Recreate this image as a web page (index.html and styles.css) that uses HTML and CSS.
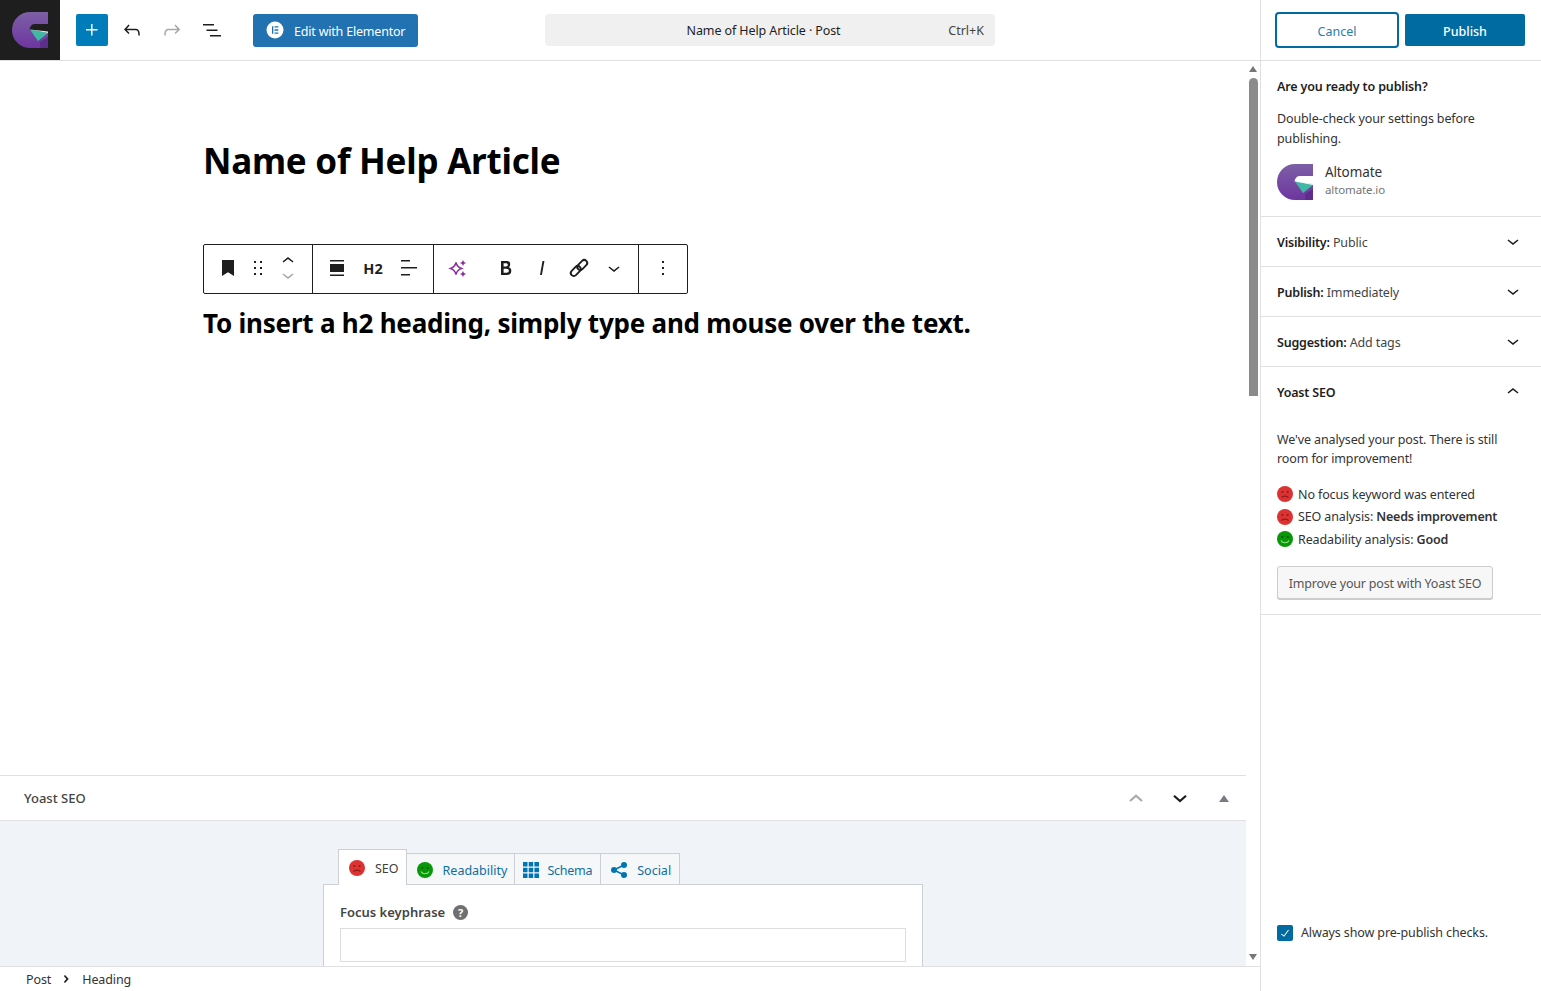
FILE: index.html
```html
<!DOCTYPE html>
<html lang="en">
<head>
<meta charset="utf-8">
<title>Name of Help Article</title>
<link rel="stylesheet" href="styles.css">
</head>
<body>
<svg class="defs" width="0" height="0" aria-hidden="true">
  <defs>
    <linearGradient id="lg" x1="0" y1="0" x2="0" y2="1"><stop offset="0" stop-color="#7d5fa6"/><stop offset="1" stop-color="#6d35a0"/></linearGradient>
    <symbol id="logo" viewBox="0 0 36 36">
      <path fill="url(#lg)" d="M18 0H36V12H23C20 12 18 14 17.500 17.500L36 21V36H18A18 18 0 0 1 18 0Z"/>
      <path fill="#5d2d8c" d="M36 25V36H28V30Z"/>
      <path fill="#3fb9a3" d="M18 17.500L36 21L26 29Z"/>
      <path fill="#dff3ee" d="M18 17.500L36 19.500V21Z"/>
    </symbol>
    <symbol id="sad" viewBox="0 0 16 16">
      <circle cx="8" cy="8" r="8" fill="#dc3232"/>
      <circle cx="5.300" cy="6" r="1" fill="#8e1a1a"/><circle cx="10.700" cy="6" r="1" fill="#8e1a1a"/>
      <path d="M4.500 11.700C6 9.700 10 9.700 11.500 11.700" fill="none" stroke="#8e1a1a" stroke-width="1.200"/>
    </symbol>
    <symbol id="happy" viewBox="0 0 16 16">
      <circle cx="8" cy="8" r="8" fill="#079707"/>
      <circle cx="5.300" cy="6" r="1" fill="#034f03"/><circle cx="10.700" cy="6" r="1" fill="#034f03"/>
      <path d="M4 9.500C5.500 12.500 10.500 12.500 12 9.500" fill="none" stroke="#8fe08f" stroke-width="1.200"/>
    </symbol>
    <symbol id="chev-down" viewBox="0 0 24 24"><path d="M17.500 11.600L12 16l-5.500-4.400.9-1.200L12 14l4.500-3.600 1 1.200z"/></symbol>
    <symbol id="chev-up" viewBox="0 0 24 24"><path d="M6.500 12.400L12 8l5.500 4.400-.9 1.200L12 10l-4.500 3.600-1-1.200z"/></symbol>
  </defs>
</svg>

<div class="app">
  <div class="main">
    <header class="topbar">
      <div class="site-logo"><svg class="logo-36"><use href="#logo"/></svg></div>
      <div class="tools">
        <button class="inserter"><svg viewBox="0 0 24 24" class="i24 white"><path d="M11 12.500V17.500H12.500V12.500H17.500V11H12.500V6H11V11H6V12.500H11Z"/></svg></button>
        <svg viewBox="0 0 24 24" class="i24"><path d="M18.300 11.700c-.6-.6-1.400-.9-2.300-.9H6.700l2.900-3.300-1.100-1-4.500 5L8.500 16l1-1-2.700-2.700H16c.5 0 .9.2 1.300.5 1 1 1 3.400 1 4.500v.3h1.500v-.2c0-1.500 0-4.300-1.500-5.700z"/></svg>
        <svg viewBox="0 0 24 24" class="i24 muted"><path d="M15.600 6.500l-1.100 1 2.900 3.300H8c-.9 0-1.700.3-2.300.9-1.400 1.500-1.400 4.200-1.400 5.600v.2h1.500v-.3c0-1.100 0-3.500 1-4.500.3-.3.700-.5 1.300-.5h9.200L14.500 15l1.100 1.100 4.600-4.600-4.600-5z"/></svg>
        <svg viewBox="0 0 24 24" class="i24"><path d="M3 6h11v1.500H3V6Zm3.500 5.500h11V13h-11v-1.500ZM21 17H10v1.500h11V17Z"/></svg>
      </div>
      <button class="elementor">
        <svg viewBox="0 0 18 18" class="el-icon"><circle cx="9" cy="9" r="8.500" fill="#fff"/><path fill="#2271b1" d="M6 5.200h1.300v7.600H6zM8.500 5.200h3.800v1.300H8.500zM8.500 8.350h3.800v1.300H8.500zM8.500 11.500h3.800v1.300H8.500z"/></svg>
        <span class="el-label">Edit with Elementor</span>
      </button>
      <div class="command">
        <span class="command-title">Name of Help Article · Post</span>
        <span class="command-key">Ctrl+K</span>
      </div>
    </header>

    <div class="workspace">
      <div class="pane">
        <div class="canvas">
          <h1 class="post-title">Name of Help Article</h1>
          <div class="block-toolbar">
            <div class="tb-group g1">
              <svg viewBox="0 0 24 24" class="i24"><path d="M6 4h12v16l-6-3.800L6 20z"/></svg>
              <svg viewBox="0 0 24 24" class="i24 drag"><path d="M8 7h2V5H8v2zm0 6h2v-2H8v2zm0 6h2v-2H8v2zm6-14v2h2V5h-2zm0 8h2v-2h-2v2zm0 6h2v-2h-2v2z"/></svg>
              <div class="movers">
                <svg class="i24 mv"><use href="#chev-up"/></svg>
                <svg class="i24 mv muted"><use href="#chev-down"/></svg>
              </div>
            </div>
            <div class="tb-group g2">
              <svg viewBox="0 0 24 24" class="i24"><path d="M5 5.500h14V4H5v1.500zM5 20h14v-1.500H5V20zM5 8h14v8H5z"/></svg>
              <span class="h2-label">H2</span>
              <svg viewBox="0 0 24 24" class="i24"><path d="M13 5.500H4V4h9v1.500Zm7 7H4V11h16v1.500Zm-7 7H4V18h9v1.500Z"/></svg>
            </div>
            <div class="tb-group g3">
              <svg viewBox="0 0 24 24" class="i24 spark"><path d="M10 6.500C10.800 10 12 11.300 15.500 12.500C12 13.700 10.800 15 10 18.500C9.200 15 8 13.700 4.500 12.500C8 11.300 9.200 10 10 6.500Z" fill="none" stroke="#8a2f9e" stroke-width="1.500"/><path fill="#8a2f9e" d="M17 4l1 2 2 1-2 1-1 2-1-2-2-1 2-1zM17 15l1 2 2 1-2 1-1 2-1-2-2-1 2-1z"/></svg>
              <svg viewBox="0 0 24 24" class="i24 b"><path d="M14.700 11.300c1-.6 1.500-1.600 1.500-3 0-2.300-1.300-3.400-4-3.400H7v14h5.800c1.400 0 2.500-.3 3.300-1 .8-.7 1.200-1.700 1.200-2.900.1-1.900-.8-3.100-2.600-3.700zm-5.100-4h2.300c.6 0 1.100.1 1.400.4.3.3.500.7.500 1.200s-.2 1-.5 1.200c-.3.3-.8.400-1.400.4H9.600V7.300zm4.600 9c-.4.3-1 .4-1.700.4H9.600v-3.900h2.900c.7 0 1.300.2 1.700.5.4.3.6.8.6 1.500s-.2 1.200-.6 1.500z"/></svg>
              <svg viewBox="0 0 24 24" class="i24 it"><path d="M12.500 5L10 19h1.900l2.500-14z"/></svg>
              <svg viewBox="0 0 24 24" class="i24 ln"><g fill="none" stroke="#1e1e1e" stroke-width="1.900"><rect x="4" y="12" width="11.500" height="6" rx="3" transform="rotate(-45 9.750 15)"/><rect x="10.500" y="6" width="11.500" height="6" rx="3" transform="rotate(-45 16.250 9)"/></g></svg>
              <svg class="i24 dn"><use href="#chev-down"/></svg>
            </div>
            <div class="tb-group g4">
              <svg viewBox="0 0 24 24" class="i24"><path d="M13 19h-2v-2h2v2zm0-6h-2v-2h2v2zm0-6h-2V5h2v2z"/></svg>
            </div>
          </div>
          <h2 class="post-h2">To insert a h2 heading, simply type and mouse over the text.</h2>
        </div>

        <section class="metabox">
          <div class="metabox-head">
            <span class="metabox-title">Yoast SEO</span>
            <div class="metabox-actions">
              <svg viewBox="0 0 24 24" class="mb-chev light"><path d="M4 16l8-7 8 7" fill="none" stroke-width="3"/></svg>
              <svg viewBox="0 0 24 24" class="mb-chev dark"><path d="M4 9l8 7 8-7" fill="none" stroke-width="3"/></svg>
              <span class="mb-tri"></span>
            </div>
          </div>
          <div class="metabox-body">
            <div class="yoast">
              <div class="tabs">
                <div class="tab active"><svg class="i16"><use href="#sad"/></svg><span>SEO</span></div>
                <div class="tab read"><svg class="i16"><use href="#happy"/></svg><span>Readability</span></div>
                <div class="tab schema"><svg viewBox="0 0 16 16" class="i16"><path fill="#0075b3" d="M0 0h4.500v4.500H0zM5.700 0h4.500v4.500H5.700zM11.400 0H16v4.500h-4.600zM0 5.700h4.500v4.500H0zM5.700 5.700h4.500v4.500H5.700zM11.400 5.700H16v4.500h-4.600zM0 11.400h4.500V16H0zM5.700 11.400h4.500V16H5.700zM11.400 11.400H16V16h-4.600z"/></svg><span>Schema</span></div>
                <div class="tab social"><svg viewBox="0 0 16 16" class="i16"><g fill="#0075b3"><circle cx="3" cy="8" r="3"/><circle cx="13" cy="3" r="3"/><circle cx="13" cy="13" r="3"/></g><path d="M3 8L13 3M3 8l10 5" stroke="#0075b3" stroke-width="1.500"/></svg><span>Social</span></div>
              </div>
              <div class="tab-panel">
                <div class="field-label"><span>Focus keyphrase</span><span class="help">?</span></div>
                <div class="field-input"></div>
              </div>
            </div>
          </div>
        </section>
      </div>
      <div class="scrollbar">
        <span class="sb-up"></span>
        <span class="sb-thumb"></span>
        <span class="sb-down"></span>
      </div>
    </div>

    <footer class="crumbs">
      <span>Post</span>
      <svg viewBox="0 0 24 24" class="crumb-sep"><path d="M10.600 6L8.800 7.500l3.800 4.500-3.800 4.500 1.800 1.500 5.400-6z"/></svg>
      <span>Heading</span>
    </footer>
  </div>

  <aside class="side">
    <div class="side-head">
      <button class="btn-cancel">Cancel</button>
      <button class="btn-publish">Publish</button>
    </div>
    <div class="prepublish">
      <p class="ready">Are you ready to publish?</p>
      <p class="check">Double-check your settings before publishing.</p>
      <div class="site">
        <svg class="logo-36"><use href="#logo"/></svg>
        <div class="site-text">
          <div class="site-name">Altomate</div>
          <div class="site-url">altomate.io</div>
        </div>
      </div>
    </div>
    <div class="row"><span><b>Visibility:</b> Public</span><svg class="i24"><use href="#chev-down"/></svg></div>
    <div class="row"><span><b>Publish:</b> Immediately</span><svg class="i24"><use href="#chev-down"/></svg></div>
    <div class="row"><span><b>Suggestion:</b> Add tags</span><svg class="i24"><use href="#chev-down"/></svg></div>
    <div class="yoast-side">
      <div class="yoast-side-head"><b>Yoast SEO</b><svg class="i24"><use href="#chev-up"/></svg></div>
      <p class="yoast-msg">We've analysed your post. There is still room for improvement!</p>
      <ul class="results">
        <li><svg class="i16"><use href="#sad"/></svg><span>No focus keyword was entered</span></li>
        <li><svg class="i16"><use href="#sad"/></svg><span>SEO analysis: <b>Needs improvement</b></span></li>
        <li><svg class="i16"><use href="#happy"/></svg><span>Readability analysis: <b>Good</b></span></li>
      </ul>
      <button class="btn-improve">Improve your post with Yoast SEO</button>
    </div>
    <label class="always">
      <span class="checkbox"><svg viewBox="0 0 24 24"><path fill="#fff" d="M16.700 7.100l-6.300 8.500-3.300-2.500-.9 1.200 4.500 3.400L17.900 8z"/></svg></span>
      <span>Always show pre-publish checks.</span>
    </label>
  </aside>
</div>
</body>
</html>
```

FILE: styles.css
```css
* { box-sizing: border-box; }
html, body { margin: 0; height: 100%; overflow: hidden; }
body { font-family: "Noto Sans", "Open Sans", sans-serif; font-size: 12.5px; color: #1e1e1e; background: #fff; }
.defs { position: absolute; }
button { font: inherit; cursor: pointer; }
p { margin: 0; }
b { font-weight: 600; }
.i24 { width: 24px; height: 24px; fill: #1e1e1e; flex: none; display: block; }
.i16 { width: 16px; height: 16px; flex: none; display: block; }
.white { fill: #fff; }
.muted { fill: #a7a7a7; }
.logo-36 { width: 36px; height: 36px; display: block; flex: none; }

.app { display: flex; height: 991px; }
.main { width: 1261px; flex: none; display: flex; flex-direction: column; border-right: 1px solid #e0e0e0; }
.side { flex: 1; display: flex; flex-direction: column; min-width: 0; letter-spacing: -.12px; }
.side b { letter-spacing: -.2px; }

.topbar { height: 61px; flex: none; display: flex; align-items: center; border-bottom: 1px solid #e0e0e0; }
.site-logo { width: 60px; height: 60px; background: #1e1e1e; display: flex; align-items: center; justify-content: center; flex: none; }
.tools { display: flex; align-items: center; gap: 16px; margin-left: 16px; }
.inserter { width: 32px; height: 32px; background: #007cba; border: 0; border-radius: 2px; padding: 4px; margin-right: -4px; }
.elementor { margin-left: 29px; width: 165px; height: 33px; background: #2271b1; color: #fff; border: 0; border-radius: 3px; display: flex; align-items: center; gap: 10px; padding: 0 0 0 13px; letter-spacing: -.2px; }
.el-icon { width: 18px; height: 18px; flex: none; }
.el-label { margin-top: 2px; }
.command { margin-left: 127px; width: 450px; height: 32px; background: #f0f0f0; border-radius: 4px; display: flex; align-items: center; position: relative; justify-content: center; }
.command-title { letter-spacing: -.1px; margin-left: -13px; }
.command-key { position: absolute; right: 11px; color: #444; }

.workspace { flex: 1; min-height: 0; display: flex; }
.pane { width: 1246px; display: flex; flex-direction: column; }
.canvas { flex: 1; min-height: 0; padding: 77px 0 0 203px; }
.post-title { margin: 0; font-size: 35px; line-height: 46px; font-weight: 700; color: #000; letter-spacing: -.25px; }
.block-toolbar { margin-top: 60px; width: 485px; height: 50px; border: 1px solid #1e1e1e; border-radius: 2px; display: flex; align-items: center; background: #fff; }
.tb-group { height: 48px; display: flex; align-items: center; border-right: 1px solid #1e1e1e; flex: none; padding-bottom: 2px; }
.tb-group:last-child { border-right: 0; }
.g1 { width: 109px; padding-left: 12px; }
.g1 .drag { margin-left: 6px; }
.movers { display: flex; flex-direction: column; margin-left: 6px; align-items: center; }
.mv { width: 24px; height: 24px; }
.mv + .mv { margin-top: -10px; }
.g2 { width: 121px; padding-left: 12px; }
.h2-label { font-size: 14.500px; font-weight: 700; width: 36px; text-align: center; margin: 0 5.500px 0 6px; }
.g3 { width: 205px; padding-left: 12px; }
.b { margin-left: 24px; }
.it { margin-left: 12px; }
.ln { margin-left: 12px; }
.dn { margin-left: 12px; }
.g4 { flex: 1; border-right: 0; justify-content: center; }
.post-h2 { margin: 7px 0 0; font-size: 26px; line-height: 44px; font-weight: 700; color: #000; letter-spacing: -.22px; }

.metabox { height: 191px; flex: none; display: flex; flex-direction: column; overflow: hidden; border-top: 1px solid #e0e0e0; }
.metabox-head { height: 45px; flex: none; display: flex; align-items: center; justify-content: space-between; padding: 0 17px 0 24px; border-bottom: 1px solid #e0e0e0; }
.metabox-title { font-weight: 500; font-size: 13px; color: #444; }
.metabox-actions { display: flex; align-items: center; }
.mb-chev { width: 18px; height: 18px; margin-right: 26px; }
.mb-chev.light { stroke: #aaa; }
.mb-chev.dark { stroke: #1e1e1e; margin-right: 32px; }
.mb-tri { width: 0; height: 0; border-left: 5px solid transparent; border-right: 5px solid transparent; border-bottom: 7px solid #787c82; margin-left: -2px; }
.metabox-body { flex: 1; background: #f0f3f7; padding: 27px 0 0 323px; overflow: hidden; }
.yoast { width: 600px; }
.tabs { display: flex; align-items: flex-end; padding-left: 15px; height: 36px; position: relative; z-index: 1; }
.tab { height: 31px; display: flex; align-items: center; gap: 10px; padding: 2px 7px 0 10px; background: #f6f7f8; border: 1px solid #ccd0d4; border-bottom: 0; border-left: 0; color: #0e6ea3; }
.tab.schema { padding: 2px 8px 0; gap: 8px; letter-spacing: -.25px; }
.tab.social { padding: 2px 8px 0 10px; }
.tab.active { height: 36px; background: #fff; color: #404040; border-left: 1px solid #ccd0d4; padding: 1px 7px 0 10px; margin-bottom: -1px; }
.tab-panel { background: #fff; border: 1px solid #ccd0d4; padding: 17px 16px; height: 120px; }
.field-label { display: flex; align-items: center; gap: 8px; font-size: 13px; font-weight: 600; color: #444; height: 20px; }
.help { width: 15px; height: 15px; border-radius: 50%; background: #707070; color: #fff; font-size: 11px; font-weight: 700; display: flex; align-items: center; justify-content: center; }
.field-input { margin-top: 6px; width: 566px; height: 34px; border: 1px solid #ddd; }

.scrollbar { width: 14px; flex: none; display: flex; flex-direction: column; align-items: center; }
.sb-up { margin-top: 5px; border-left: 4.500px solid transparent; border-right: 4.500px solid transparent; border-bottom: 6px solid #777; }
.sb-thumb { margin-top: 6px; width: 9px; height: 318px; background: #8b8b8b; border-radius: 5px 5px 0 0; }
.sb-down { margin-top: auto; margin-bottom: 6px; border-left: 4.500px solid transparent; border-right: 4.500px solid transparent; border-top: 6px solid #777; }

.crumbs { height: 25px; flex: none; border-top: 1px solid #e0e0e0; display: flex; align-items: center; padding-left: 26px; color: #333; letter-spacing: -.1px; }
.crumb-sep { width: 16px; height: 16px; fill: #1e1e1e; margin: 0 8.500px 0 6.500px; }

.side-head { height: 61px; flex: none; display: flex; align-items: center; gap: 6px; padding-left: 14px; border-bottom: 1px solid #e0e0e0; }
.btn-cancel { width: 124px; height: 36px; background: #fff; color: #2a7ea8; border: 2px solid #006ba1; border-radius: 4px; padding: 3px 0 0; }
.btn-publish { width: 120px; height: 32px; background: #006ba1; color: #fff; border: 0; border-radius: 2px; font-weight: 500; padding: 3px 0 0; }
.prepublish { height: 156px; flex: none; padding: 16px 16px 0; border-bottom: 1px solid #e0e0e0; }
.ready { font-weight: 600; line-height: 19px; letter-spacing: -.15px; }
.check { margin-top: 13px; line-height: 20px; width: 225px; color: #333; }
.site { display: flex; gap: 12px; margin-top: 15px; }
.site-name { font-size: 13.500px; line-height: 18px; margin-top: -1px; color: #333; }
.site-url { font-size: 11.500px; color: #757575; line-height: 18px; }
.row { height: 50px; flex: none; display: flex; align-items: center; justify-content: space-between; padding: 0 16px; border-bottom: 1px solid #e0e0e0; color: #444; }
.row b { color: #1e1e1e; }
.row span { margin-top: 1px; }
.row svg { margin-bottom: 1px; }
.yoast-side { flex: none; height: 248px; padding: 0 16px; border-bottom: 1px solid #e0e0e0; }
.yoast-side-head { height: 50px; display: flex; align-items: center; justify-content: space-between; }
.yoast-msg { margin-top: 13px; line-height: 19px; color: #333; }
.results { list-style: none; margin: 16px 0 0; padding: 0; display: flex; flex-direction: column; gap: 2.500px; }
.results li { display: flex; align-items: center; gap: 5px; height: 20px; color: #333; }
.btn-improve { margin-top: 17px; width: 216px; height: 33px; background: #f7f7f7; border: 1px solid #ccc; border-radius: 3px; color: #555; box-shadow: 0 1px 0 #ccc; padding: 1px 0 0; letter-spacing: -.18px; }
.always { margin-top: auto; margin-bottom: 50px; padding-left: 16px; display: flex; align-items: center; gap: 8px; color: #333; }
.checkbox { width: 16px; height: 16px; background: #006ba1; border-radius: 2px; display: block; }
.checkbox svg { width: 16px; height: 16px; display: block; }
```
